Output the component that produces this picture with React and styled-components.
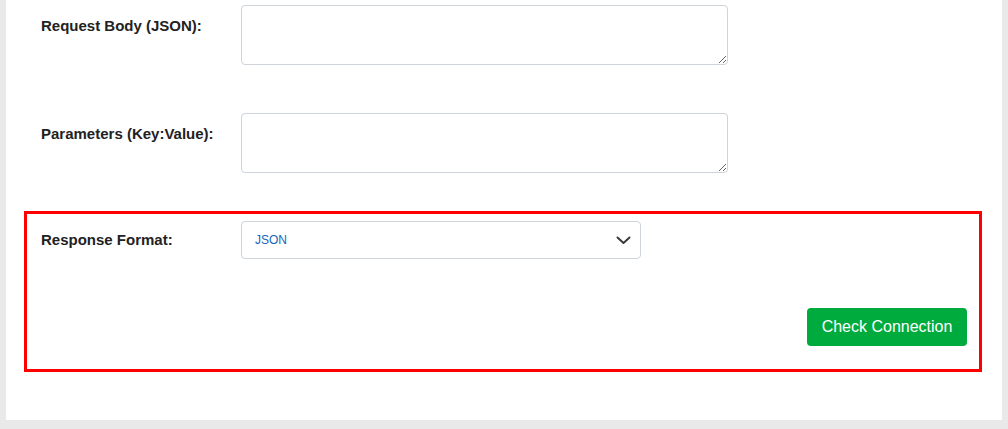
import React from "react";
import styled, { createGlobalStyle } from "styled-components";

const GlobalStyle = createGlobalStyle`
  html, body {
    margin: 0;
    padding: 0;
    background: #e9e9e9;
    font-family: "Liberation Sans", Arial, sans-serif;
  }
`;

const Page = styled.div`
  width: 1008px;
  height: 429px;
  overflow: hidden;
  background: #e9e9e9;
`;

const Panel = styled.div`
  margin-left: 6px;
  width: 996px;
  height: 420px;
  background: #fff;
  box-sizing: border-box;
  padding: 5px 20px 0 18px;
`;

const Row = styled.div`
  display: grid;
  grid-template-columns: 200px 1fr;
  align-items: start;
  padding-left: ${(p) => p.$indent || 17}px;
  margin-bottom: ${(p) => p.$gap || 0}px;
`;

const Label = styled.label`
  font-size: 15px;
  font-weight: bold;
  color: #222;
  line-height: 20px;
  padding-top: ${(p) => p.$top || 11}px;
`;

const TextArea = styled.textarea`
  width: 487px;
  height: 60px;
  box-sizing: border-box;
  border: 1px solid #ced4da;
  border-radius: 4px;
  padding: 6px 10px;
  font-family: inherit;
  font-size: 13px;
  display: block;
  margin: 0;
`;

const Highlight = styled.section`
  border: 3px solid #ff0000;
  padding: 7px 12px 23px 0;
  display: flex;
  flex-direction: column;
`;

const SelectBox = styled.div`
  position: relative;
  width: 400px;
  height: 38px;
  box-sizing: border-box;
  border: 1px solid #ced4da;
  border-radius: 4px;
  display: flex;
  align-items: center;
  padding-left: 13px;
  font-size: 12px;
  color: #1565c0;
`;

const Chevron = styled.svg`
  position: absolute;
  right: 9px;
  top: 14px;
`;

const Actions = styled.div`
  display: flex;
  justify-content: flex-end;
  margin-top: 49px;
`;

const Button = styled.button`
  height: 38px;
  width: 160px;
  border: none;
  border-radius: 4px;
  background: #00ab3e;
  color: #fff;
  font-family: inherit;
  font-size: 16px;
  cursor: pointer;
`;

export default function App() {
  return (
    <Page>
      <GlobalStyle />
      <Panel>
        <Row $gap={48}>
          <Label>Request Body (JSON):</Label>
          <TextArea />
        </Row>
        <Row $gap={38}>
          <Label>Parameters (Key:Value):</Label>
          <TextArea />
        </Row>
        <Highlight>
          <Row $indent={14}>
            <Label $top={9}>Response Format:</Label>
            <SelectBox>
              JSON
              <Chevron width="15" height="9" viewBox="0 0 15 9">
                <path d="M1.5 1.5 L7.5 7 L13.5 1.5" fill="none" stroke="#343a40" strokeWidth="2" strokeLinecap="round" strokeLinejoin="round" />
              </Chevron>
            </SelectBox>
          </Row>
          <Actions>
            <Button>Check Connection</Button>
          </Actions>
        </Highlight>
      </Panel>
    </Page>
  );
}
